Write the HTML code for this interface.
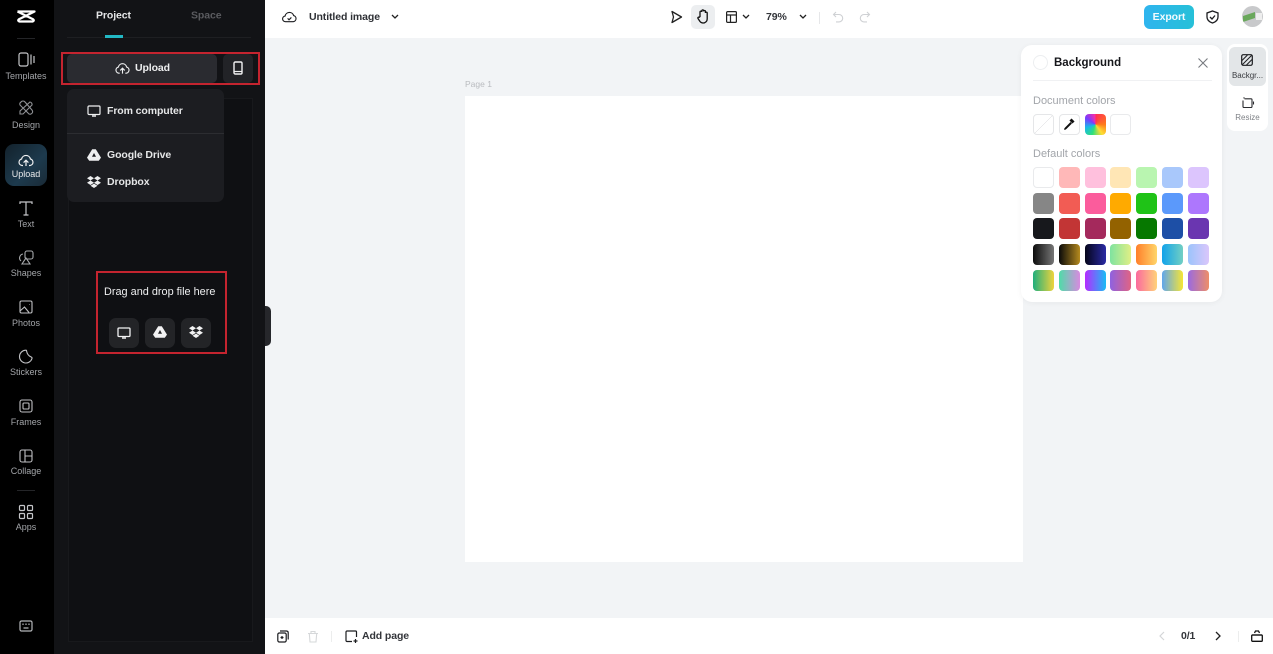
<!DOCTYPE html>
<html><head><meta charset="utf-8">
<style>
*{box-sizing:border-box}
html,body{margin:0;padding:0;width:1273px;height:654px;overflow:hidden;background:#f2f4f6;font-family:"Liberation Sans",sans-serif}
.a{position:absolute}
.t{position:absolute;white-space:nowrap}
svg{position:absolute;overflow:visible;fill:none}
.nl{position:absolute;left:0;width:52px;text-align:center;font-size:9px;color:#a3a5a9;line-height:11px}
.sw{position:absolute;width:21px;height:21px;border-radius:4px}
.m{font-size:10.5px;font-weight:bold;line-height:13px;letter-spacing:-.1px}
</style></head><body>
<div class="a" style="left:0;top:0;width:54px;height:654px;background:#000"></div>
<div class="a" style="left:54px;top:0;width:211px;height:654px;background:#121316"></div>
<div class="a" style="left:68px;top:98px;width:185px;height:544px;background:#0f1013;border:1px solid #18191c"></div>
<div class="a" style="left:67px;top:37px;width:184px;height:1px;background:#1e1f22"></div>
<div class="a" style="left:105px;top:35px;width:18px;height:3px;background:#22b8c4"></div>
<div class="t m" style="left:96px;top:9px;color:#e4e5e7;transform:translateY(.5px)">Project</div>
<div class="t m" style="left:191px;top:9px;color:#5a5b5f;transform:translateY(.5px)">Space</div>

<!-- logo -->
<svg style="left:16px;top:9px" width="20" height="15" viewBox="0 0 20 15" stroke="#fff" stroke-width="2.3" stroke-linejoin="round"><path d="M1.5 2.5H18.5L3.5 10Q1 11.5 3.5 12.5H16.5Q19 11.5 16.5 10L1.5 2.5"/></svg>
<div class="a" style="left:17px;top:38px;width:18px;height:1px;background:#242528"></div>
<div class="a" style="left:17px;top:490px;width:18px;height:1px;background:#242528"></div>

<!-- nav icons -->
<svg style="left:18px;top:52px" width="18" height="16" viewBox="0 0 18 16" stroke="#c5c6c9" stroke-width="1.2"><rect x="1" y="1" width="9" height="13" rx="2"/><path d="M13 2.5V12.5M16 4V11"/></svg>
<div class="nl" style="top:71px">Templates</div>
<svg style="left:18px;top:100px" width="16" height="16" viewBox="0 0 16 16" stroke="#8f9195" stroke-width="1.1"><path d="M3 2 a2.5 2.5 0 0 1 4 0 L14 10 a2.5 2.5 0 0 1-1 4 a2.5 2.5 0 0 1-3-1 L2 5 a2.5 2.5 0 0 1 1-3z"/><path d="M12 2 a2.5 2.5 0 0 1 2 3 L5 14 H2 V11z"/></svg>
<div class="nl" style="top:120px">Design</div>
<div class="a" style="left:5px;top:144px;width:42px;height:42px;border-radius:9px;background:linear-gradient(135deg,#13222c,#1d3a4d 60%,#1a2a36)"></div>
<svg style="left:18px;top:153px" width="16" height="14" viewBox="0 0 16 14" stroke="#f0f1f2" stroke-width="1.2"><path d="M5 12.5H4 A3.3 3.3 0 0 1 3.6 6 A4.5 4.5 0 0 1 12.4 6 A3.3 3.3 0 0 1 12 12.5H11"/><path d="M8 13V7.5M5.6 9.6 8 7.2l2.4 2.4"/></svg>
<div class="nl" style="top:169px;color:#e8e9ea">Upload</div>
<svg style="left:19px;top:201px" width="14" height="15" viewBox="0 0 14 15" stroke="#c5c6c9" stroke-width="1.2"><path d="M1 3V1H13V3M7 1V14M4.5 14H9.5"/></svg>
<div class="nl" style="top:219px">Text</div>
<svg style="left:18px;top:250px" width="16" height="16" viewBox="0 0 16 16" stroke="#a8aaad" stroke-width="1.1"><rect x="7" y="1" width="8" height="8" rx="2"/><path d="M5 4 A4 4 0 0 0 3 11 M8 8 L12 14 H4z"/></svg>
<div class="nl" style="top:268px">Shapes</div>
<svg style="left:19px;top:300px" width="14" height="14" viewBox="0 0 14 14" stroke="#c0c1c4" stroke-width="1.1"><rect x="1" y="1" width="12" height="12" rx="1.5"/><path d="M1 11 5.5 7 10 12.5M10 4.5h.5"/></svg>
<div class="nl" style="top:318px">Photos</div>
<svg style="left:18px;top:349px" width="15" height="15" viewBox="0 0 15 15" stroke="#c0c1c4" stroke-width="1.1"><path d="M8 1.2 A6.4 6.4 0 1 0 14 9.5 Q14.3 8.5 13.2 8 Q9.5 6.5 8.6 2.2 Q8.6 1.2 8 1.2z"/></svg>
<div class="nl" style="top:367px">Stickers</div>
<svg style="left:19px;top:399px" width="14" height="14" viewBox="0 0 14 14" stroke="#c0c1c4" stroke-width="1.1"><rect x="1" y="1" width="12" height="12" rx="2"/><rect x="4" y="4" width="6" height="6" rx="1"/></svg>
<div class="nl" style="top:417px">Frames</div>
<svg style="left:19px;top:449px" width="14" height="14" viewBox="0 0 14 14" stroke="#c0c1c4" stroke-width="1.1"><rect x="1" y="1" width="12" height="12" rx="2"/><path d="M6 1V13M6 7H13"/></svg>
<div class="nl" style="top:466px">Collage</div>
<svg style="left:18px;top:504px" width="16" height="16" viewBox="0 0 16 16" stroke="#c5c6c9" stroke-width="1.2"><rect x="1.5" y="1.5" width="5" height="5" rx="1"/><rect x="9.5" y="1.5" width="5" height="5" rx="1"/><rect x="1.5" y="9.5" width="5" height="5" rx="1"/><rect x="9.5" y="9.5" width="5" height="5" rx="1"/></svg>
<div class="nl" style="top:522px">Apps</div>
<svg style="left:19px;top:620px" width="14" height="12" viewBox="0 0 14 12" stroke="#b4b6b9" stroke-width="1.2"><rect x="1" y="1" width="12" height="10" rx="1.5"/><path d="M4 3.5V5M7 3.5V5M10 3.5V5M4.5 8H9.5"/></svg>

<!-- upload row -->
<div class="a" style="left:67px;top:54px;width:150px;height:29px;border-radius:5px;background:#2a2b30"></div>
<div class="a" style="left:223px;top:54px;width:30px;height:29px;border-radius:5px;background:#222327"></div>
<div class="a" style="left:61px;top:52px;width:199px;height:33px;border:2px solid #c4242f"></div>
<svg style="left:115px;top:61px" width="15" height="14" viewBox="0 0 16 14" stroke="#f0f1f2" stroke-width="1.2"><path d="M5 12.5H4 A3.3 3.3 0 0 1 3.6 6 A4.5 4.5 0 0 1 12.4 6 A3.3 3.3 0 0 1 12 12.5H11"/><path d="M8 13V7.5M5.6 9.6 8 7.2l2.4 2.4"/></svg>
<div class="t m" style="left:135px;top:62px;color:#eeeff0">Upload</div>
<svg style="left:233px;top:61px" width="10" height="14" viewBox="0 0 10 14" stroke="#f2f2f3" stroke-width="1.4"><rect x="1" y="1" width="8" height="12" rx="1.3"/><path d="M1 10.5H9" stroke-width="1.2"/></svg>

<!-- dropdown -->
<div class="a" style="left:67px;top:89px;width:157px;height:113px;border-radius:7px;background:#1c1d21"></div>
<div class="a" style="left:67px;top:133px;width:157px;height:1px;background:#2c2d31"></div>
<svg style="left:87px;top:105px" width="14" height="12" viewBox="0 0 14 12" stroke="#eeeff0" stroke-width="1.2"><rect x="1" y="1" width="12" height="8.5" rx="1"/><path d="M5 11H9" stroke-width="1.5"/></svg>
<div class="t m" style="left:107px;top:105px;color:#e6e7e8">From computer</div>
<svg style="left:87px;top:149px" width="14" height="12" viewBox="0 0 14 12"><path fill-rule="evenodd" d="M5.2 .3H8.8L14 8.6 11.8 11.7H2.2L0 8.6zM7 4 5 7.8H9z" fill="#eeeff0"/></svg>
<div class="t m" style="left:107px;top:149px;color:#e6e7e8">Google Drive</div>
<svg style="left:87px;top:176px" width="14" height="12" viewBox="0 0 14 12"><path d="M3.5 0 7 2.2 3.5 4.5 0 2.2z M10.5 0 14 2.2 10.5 4.5 7 2.2z M3.5 4.5 7 6.8 3.5 9 0 6.8z M10.5 4.5 14 6.8 10.5 9 7 6.8z M3.5 9.8 7 7.6l3.5 2.2L7 12z" fill="#eeeff0"/></svg>
<div class="t m" style="left:107px;top:176px;color:#e6e7e8">Dropbox</div>

<!-- drag box -->
<div class="a" style="left:96px;top:271px;width:131px;height:83px;border:2px solid #c4242f"></div>
<div class="t" style="left:104px;top:286px;font-size:10.9px;color:#eeeff0;line-height:13px">Drag and drop file here</div>
<div class="a" style="left:109px;top:318px;width:30px;height:30px;border-radius:7px;background:#232427"></div>
<div class="a" style="left:145px;top:318px;width:30px;height:30px;border-radius:7px;background:#232427"></div>
<div class="a" style="left:181px;top:318px;width:30px;height:30px;border-radius:7px;background:#232427"></div>
<svg style="left:117px;top:327px" width="14" height="12" viewBox="0 0 14 12" stroke="#f2f2f3" stroke-width="1.3"><rect x="1" y="1" width="12" height="8.5" rx="1"/><path d="M5 11H9" stroke-width="1.5"/></svg>
<svg style="left:153px;top:326px" width="14" height="12" viewBox="0 0 14 12"><path fill-rule="evenodd" d="M5.2 .3H8.8L14 8.6 11.8 11.7H2.2L0 8.6zM7 4 5 7.8H9z" fill="#f2f2f3"/></svg>
<svg style="left:189px;top:326px" width="14" height="12" viewBox="0 0 14 12"><path d="M3.5 0 7 2.2 3.5 4.5 0 2.2z M10.5 0 14 2.2 10.5 4.5 7 2.2z M3.5 4.5 7 6.8 3.5 9 0 6.8z M10.5 4.5 14 6.8 10.5 9 7 6.8z M3.5 9.8 7 7.6l3.5 2.2L7 12z" fill="#f2f2f3"/></svg>
<!-- collapse handle -->
<div class="a" style="left:265px;top:306px;width:6px;height:40px;border-radius:0 5px 5px 0;background:#26272b"></div>

<!-- top bar -->
<div class="a" style="left:265px;top:0;width:1008px;height:38px;background:#fff"></div>
<svg style="left:282px;top:10px" width="15" height="13" viewBox="0 0 16 13" stroke="#1c1d20" stroke-width="1.2"><path d="M4 12 A3 3 0 0 1 3.3 6 A4.7 4.7 0 0 1 12.4 5.5 A3.3 3.3 0 0 1 12 12z"/><path d="M6 8.5 7.5 10 10 7.5"/></svg>
<div class="t m" style="left:309px;top:11px;color:#2e3035">Untitled image</div>
<svg style="left:391px;top:14px" width="8" height="5" viewBox="0 0 8 5" stroke="#222" stroke-width="1.3"><path d="M1 1l3 3 3-3"/></svg>
<svg style="left:670px;top:10px" width="13" height="14" viewBox="0 0 13 14" stroke="#222" stroke-width="1.3"><path d="M2 1.5 11.5 7 2 12.5 3.5 7z" stroke-linejoin="round"/></svg>
<div class="a" style="left:691px;top:5px;width:24px;height:24px;border-radius:5px;background:#eceef0"></div>
<svg style="left:697px;top:9px" width="12" height="15" viewBox="0 0 12 15" stroke="#111" stroke-width="1.3"><path d="M3 8V3a.9.9 0 0 1 1.8 0V1.8a.9.9 0 0 1 1.8 0V2.4a.9.9 0 0 1 1.8 0V4a.9.9 0 0 1 1.8 0V10a4 4 0 0 1-4 4H6A4 4 0 0 1 3 12.5L1 9.5C.5 8.5 2 7.5 3 8.5"/></svg>
<svg style="left:726px;top:11px" width="11" height="12" viewBox="0 0 11 12" stroke="#222" stroke-width="1.2"><rect x=".6" y=".6" width="9.8" height="10.8" rx="1"/><path d="M.6 4H10.4M4.5 4V11.4"/></svg>
<svg style="left:742px;top:14px" width="8" height="5" viewBox="0 0 8 5" stroke="#222" stroke-width="1.3"><path d="M1 1l3 3 3-3"/></svg>
<div class="t m" style="left:766px;top:11px;color:#33353a">79%</div>
<svg style="left:799px;top:14px" width="8" height="5" viewBox="0 0 8 5" stroke="#222" stroke-width="1.3"><path d="M1 1l3 3 3-3"/></svg>
<div class="a" style="left:819px;top:12px;width:1px;height:12px;background:#e6e7e9"></div>
<svg style="left:832px;top:11px" width="12" height="12" viewBox="0 0 12 12" stroke="#cfd1d4" stroke-width="1.1"><path d="M4 1 1.5 3.5 4 6M1.5 3.5H7a3.7 3.7 0 0 1 0 7.4H4"/></svg>
<svg style="left:859px;top:11px" width="12" height="12" viewBox="0 0 12 12" stroke="#cfd1d4" stroke-width="1.1"><path d="M8 1 10.5 3.5 8 6M10.5 3.5H5a3.7 3.7 0 0 0 0 7.4H8"/></svg>
<div class="a" style="left:1144px;top:5px;width:50px;height:24px;border-radius:6px;background:linear-gradient(90deg,#2fb4ee,#26c0d8)"></div>
<div class="t m" style="left:1144px;top:11px;width:50px;text-align:center;color:#f2fbfe">Export</div>
<svg style="left:1206px;top:10px" width="13" height="14" viewBox="0 0 13 14" stroke="#1c1d20" stroke-width="1.3"><path d="M6.5 1 12 3V7C12 10 9.5 12 6.5 13 3.5 12 1 10 1 7V3z"/><path d="M4 7 6 9 9 5.5"/></svg>
<div class="a" style="left:1242px;top:6px;width:21px;height:21px;border-radius:50%;background:#c8c9cb;overflow:hidden"><div class="a" style="left:1px;top:8px;width:12px;height:6px;background:#6aa85c;transform:skewY(-18deg)"></div><div class="a" style="left:14px;top:7px;width:6px;height:7px;background:#eee"></div></div>

<!-- canvas -->
<div class="t" style="left:465px;top:79px;font-size:8.5px;color:#b9bbbf;line-height:11px">Page 1</div>
<div class="a" style="left:465px;top:96px;width:558px;height:466px;background:#fff"></div>

<!-- background panel -->
<div class="a" style="left:1021px;top:45px;width:201px;height:257px;border-radius:11px;background:#fff;box-shadow:0 1px 6px rgba(0,0,0,.05)"></div>
<div class="a" style="left:1033px;top:55px;width:15px;height:15px;border-radius:50%;border:1px solid #eceef0;background:#fff"></div>
<div class="t" style="left:1054px;top:56px;font-size:11.5px;font-weight:bold;color:#15161a;line-height:15px">Background</div>
<svg style="left:1198px;top:58px" width="10" height="10" viewBox="0 0 10 10" stroke="#777a7f" stroke-width="1.1"><path d="M.5.5 9.5 9.5M9.5.5.5 9.5"/></svg>
<div class="a" style="left:1033px;top:80px;width:179px;height:1px;background:#f0f1f3"></div>
<div class="t" style="left:1033px;top:95px;font-size:11px;color:#a2a5aa;line-height:13px">Document colors</div>
<div class="sw" style="left:1033px;top:114px;border:1px solid #e5e6e8;background:linear-gradient(45deg,#fff 49%,#d5d6d8 49.5%,#d5d6d8 50.5%,#fff 51%);transform:scaleX(-1)"></div>
<div class="sw" style="left:1059px;top:114px;border:1px solid #e5e6e8;background:#fff"></div>
<svg style="left:1063px;top:118px" width="12" height="13" viewBox="0 0 12 13"><path d="M7.5 1.5 10.5 4.5" stroke="#111" stroke-width="3"/><path d="M8 4.5 2.5 10 1.5 11.5 3 10.5 8.5 5" stroke="#111" stroke-width="1.3"/></svg>
<div class="sw" style="left:1085px;top:114px;background:conic-gradient(#ff2d55 0,#ff7a1a 25%,#ffdd33 40%,#2fe07a 55%,#18b8e8 70%,#7a3bff 85%,#ff2da0 100%)"></div>
<div class="sw" style="left:1110px;top:114px;border:1px solid #e9eaec;background:#fff"></div>
<div class="t" style="left:1033px;top:148px;font-size:11px;color:#a2a5aa;line-height:13px">Default colors</div>

<div class="sw" style="left:1033px;top:167px;background:#fff;border:1px solid #e9eaec"></div>
<div class="sw" style="left:1059px;top:167px;background:#ffb8b8"></div>
<div class="sw" style="left:1085px;top:167px;background:#ffc0dd"></div>
<div class="sw" style="left:1110px;top:167px;background:#ffe6b5"></div>
<div class="sw" style="left:1136px;top:167px;background:#b9f5b0"></div>
<div class="sw" style="left:1162px;top:167px;background:#a9c8fb"></div>
<div class="sw" style="left:1188px;top:167px;background:#dcc5fd"></div>

<div class="sw" style="left:1033px;top:193px;background:#868686"></div>
<div class="sw" style="left:1059px;top:193px;background:#f25c54"></div>
<div class="sw" style="left:1085px;top:193px;background:#fb5c9c"></div>
<div class="sw" style="left:1110px;top:193px;background:#ffaa00"></div>
<div class="sw" style="left:1136px;top:193px;background:#1fc317"></div>
<div class="sw" style="left:1162px;top:193px;background:#5b99fb"></div>
<div class="sw" style="left:1188px;top:193px;background:#ad77fd"></div>

<div class="sw" style="left:1033px;top:218px;background:#17181c"></div>
<div class="sw" style="left:1059px;top:218px;background:#c23535"></div>
<div class="sw" style="left:1085px;top:218px;background:#a4295c"></div>
<div class="sw" style="left:1110px;top:218px;background:#936200"></div>
<div class="sw" style="left:1136px;top:218px;background:#067800"></div>
<div class="sw" style="left:1162px;top:218px;background:#1d4fa6"></div>
<div class="sw" style="left:1188px;top:218px;background:#6a36b0"></div>

<div class="sw" style="left:1033px;top:244px;background:linear-gradient(90deg,#0c0c0c,#777)"></div>
<div class="sw" style="left:1059px;top:244px;background:linear-gradient(90deg,#0a0a0a,#b58a1e)"></div>
<div class="sw" style="left:1085px;top:244px;background:linear-gradient(90deg,#05051a,#2a2aa5)"></div>
<div class="sw" style="left:1110px;top:244px;background:linear-gradient(90deg,#7fe3a0,#e0ef85)"></div>
<div class="sw" style="left:1136px;top:244px;background:linear-gradient(90deg,#ff7f2a,#ffd56a)"></div>
<div class="sw" style="left:1162px;top:244px;background:linear-gradient(90deg,#12a3ea,#72cfc3)"></div>
<div class="sw" style="left:1188px;top:244px;background:linear-gradient(90deg,#9cc4fb,#dac6fb)"></div>

<div class="sw" style="left:1033px;top:270px;background:linear-gradient(90deg,#1fae7c,#eed43c)"></div>
<div class="sw" style="left:1059px;top:270px;background:linear-gradient(90deg,#4fdca8,#d88ae0)"></div>
<div class="sw" style="left:1085px;top:270px;background:linear-gradient(90deg,#b52bff,#19bcf5)"></div>
<div class="sw" style="left:1110px;top:270px;background:linear-gradient(90deg,#8f62e0,#df6384)"></div>
<div class="sw" style="left:1136px;top:270px;background:linear-gradient(90deg,#fb6a9e,#ffd27a)"></div>
<div class="sw" style="left:1162px;top:270px;background:linear-gradient(90deg,#5fa6ec,#f6e536)"></div>
<div class="sw" style="left:1188px;top:270px;background:linear-gradient(90deg,#9a6ae0,#ee8e68)"></div>

<!-- right rail -->
<div class="a" style="left:1227px;top:44px;width:41px;height:87px;border-radius:8px;background:#fff"></div>
<div class="a" style="left:1229px;top:47px;width:37px;height:39px;border-radius:6px;background:#e3e6e8"></div>
<svg style="left:1241px;top:54px" width="12" height="12" viewBox="0 0 12 12" stroke="#1c1d20" stroke-width="1.2"><rect x=".7" y=".7" width="10.6" height="10.6" rx="1.5"/><path d="M1 6.5 6.5 1M1.5 10.5 10.5 1.5M5.5 11 11 5.5" stroke-width="1"/></svg>
<div class="t" style="left:1229px;top:71px;width:37px;text-align:center;font-size:8px;color:#3a3c40;line-height:10px">Backgr...</div>
<svg style="left:1241px;top:97px" width="13" height="12" viewBox="0 0 13 12" stroke="#2a2b2f" stroke-width="1.1"><path d="M3.5 1.8H10a1 1 0 0 1 1 1V9.5a1 1 0 0 1-1 1H3a1 1 0 0 1-1-1V3.5M3 .3V1.5M12.5 4.5V7.5"/></svg>
<div class="t" style="left:1229px;top:113px;width:37px;text-align:center;font-size:8px;color:#7e8186;line-height:10px">Resize</div>

<!-- bottom bar -->
<div class="a" style="left:265px;top:618px;width:1008px;height:36px;background:#fff"></div>
<svg style="left:277px;top:630px" width="12" height="13" viewBox="0 0 12 13" stroke="#1c1d20" stroke-width="1.2"><rect x=".8" y="3" width="8.4" height="9" rx="1.5"/><path d="M3 1H9.5A1.8 1.8 0 0 1 11.2 2.8V9.5M5 6V9M3.5 7.5H6.5"/></svg>
<svg style="left:307px;top:630px" width="12" height="13" viewBox="0 0 12 13" stroke="#d6d8da" stroke-width="1.1"><path d="M1 3.5H11M4 3.5V1.5H8V3.5M2.3 3.5 3 12H9L9.7 3.5"/></svg>
<div class="a" style="left:331px;top:631px;width:1px;height:11px;background:#eceded"></div>
<svg style="left:345px;top:630px" width="13" height="13" viewBox="0 0 13 13" stroke="#1c1d20" stroke-width="1.2"><path d="M7 11.5H2A1 1 0 0 1 1 10.5V2A1 1 0 0 1 2 1H10.5A1 1 0 0 1 11.5 2V7M10.5 9V13M8.5 11H12.5"/></svg>
<div class="t m" style="left:362px;top:630px;color:#33353a">Add page</div>
<svg style="left:1159px;top:631px" width="6" height="10" viewBox="0 0 6 10" stroke="#d4d6d8" stroke-width="1.2"><path d="M5 1 1 5l4 4"/></svg>
<div class="t m" style="left:1181px;top:630px;color:#33353a">0/1</div>
<svg style="left:1215px;top:631px" width="6" height="10" viewBox="0 0 6 10" stroke="#222" stroke-width="1.3"><path d="M1 1l4 4-4 4"/></svg>
<div class="a" style="left:1238px;top:631px;width:1px;height:11px;background:#eceded"></div>
<svg style="left:1251px;top:630px" width="12" height="12" viewBox="0 0 12 12" stroke="#111" stroke-width="1.3"><rect x=".7" y="5" width="10.6" height="6.3" rx=".8"/><path d="M3.5 3 4.5 1H7.5L8.5 3M1 5H11"/></svg>
</body></html>
